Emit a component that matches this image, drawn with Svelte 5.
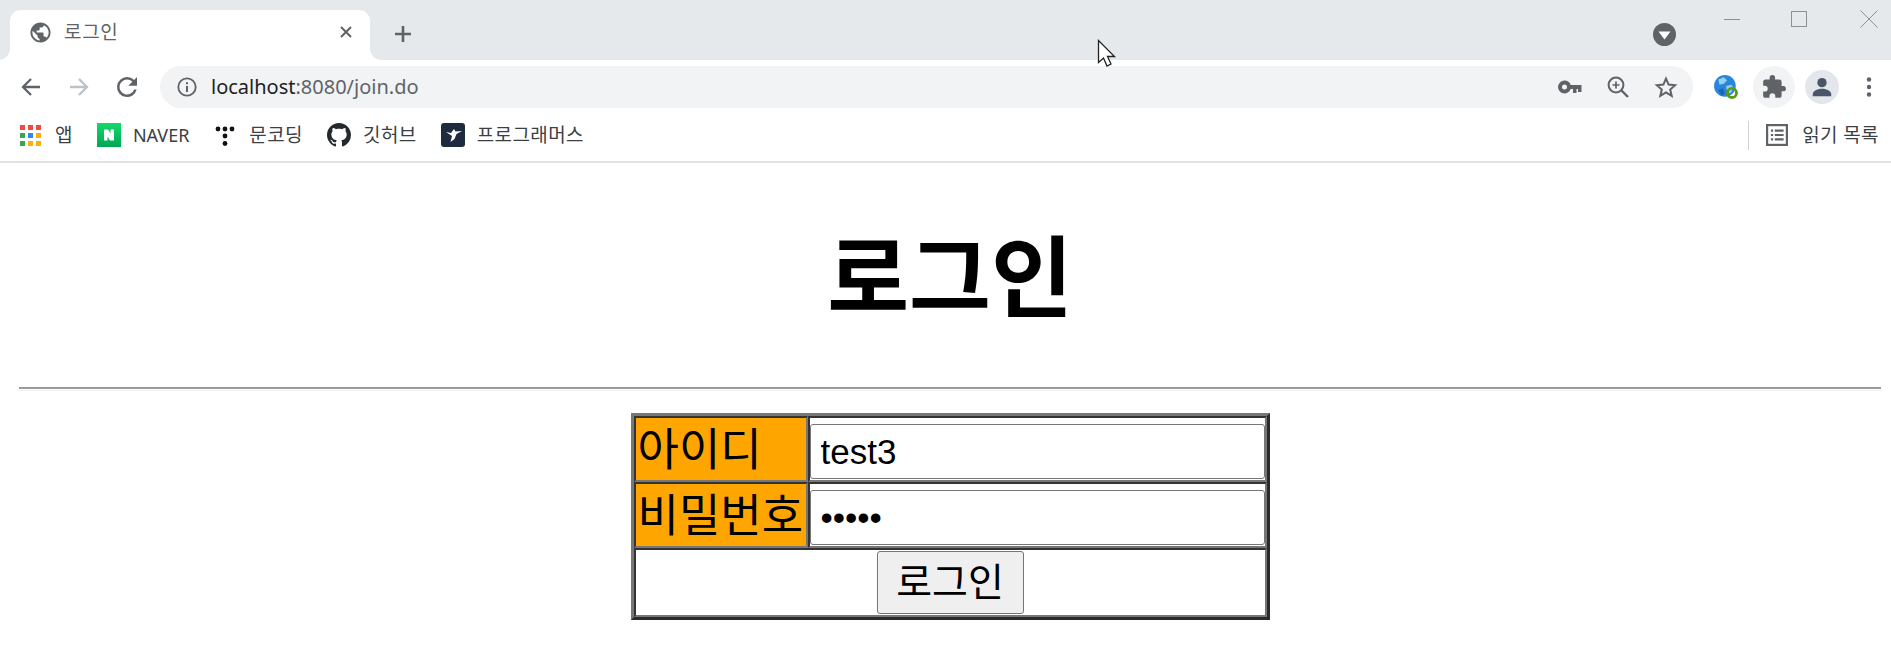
<script lang="ts">
	const bookmarks = [
		{ id: 'apps', label: '앱' },
		{ id: 'naver', label: 'NAVER' },
		{ id: 'moon', label: '문코딩' },
		{ id: 'github', label: '깃허브' },
		{ id: 'prog', label: '프로그래머스' }
	];
	const appColors = ['#ef4b42', '#ef4b42', '#ef4b42', '#34a853', '#2a8cf0', '#fbaf0c', '#34a853', '#fbaf0c', '#fbaf0c'];
</script>

<div class="chrome">
	<div class="tabstrip">
		<div class="tab">
			<svg class="favicon" viewBox="0 0 24 24" width="23" height="23">
				<path fill="#5f6368" d="M12 1.500C6.200 1.500 1.500 6.200 1.500 12S6.200 22.500 12 22.500 22.500 17.800 22.500 12 17.800 1.500 12 1.500zM10.900 20.300c-4.100-.5-7.300-4-7.300-8.300 0-.7.100-1.300.2-1.900L9 15.300v1.100c0 1.100.9 2 2 2v1.900zm7.200-2.700c-.3-.8-1-1.400-1.900-1.400h-1v-3.100c0-.6-.5-1-1-1H8v-2.100h2.100c.6 0 1-.5 1-1V6.900h2.100c1.100 0 2.100-.9 2.100-2.100v-.4c3.100 1.200 5.200 4.200 5.200 7.700 0 2.200-.9 4.100-2.300 5.500z" />
			</svg>
			<span class="tab-title">로그인</span>
			<svg class="tab-close" viewBox="0 0 14 14" width="14" height="14">
				<path d="M2 2l10 10M12 2L2 12" stroke="#5f6368" stroke-width="2" fill="none" />
			</svg>
		</div>
		<svg class="plus" viewBox="0 0 20 20" width="20" height="20">
			<path d="M10 2v16M2 10h16" stroke="#5f6368" stroke-width="2.600" fill="none" />
		</svg>
		<svg class="tabsearch" viewBox="0 0 23 23" width="23" height="23">
			<circle cx="11.500" cy="11.500" r="11.500" fill="#5f6368" />
			<path d="M5.500 8.500h12l-6 8z" fill="#fff" />
		</svg>
		<div class="win">
			<svg viewBox="0 0 16 16" width="16" height="16"><path d="M0 8.500h16" stroke="#8d9094" fill="none" /></svg>
			<svg viewBox="0 0 16 16" width="16" height="16"><rect x="0.500" y="0.500" width="15" height="15" stroke="#8d9094" fill="none" /></svg>
			<svg viewBox="0 0 18 18" width="18" height="18"><path d="M.5.500l17 17M17.500.500l-17 17" stroke="#8d9094" fill="none" /></svg>
		</div>
	</div>

	<div class="toolbar">
		<svg class="nav" viewBox="0 0 24 24" width="24" height="24"><path d="M21 12H4.500M12 4l-8 8 8 8" stroke="#5f6368" stroke-width="2.300" fill="none" /></svg>
		<svg class="nav" viewBox="0 0 24 24" width="24" height="24"><path d="M3 12h16.500M12 4l8 8-8 8" stroke="#bdc1c6" stroke-width="2.300" fill="none" /></svg>
		<svg class="nav" viewBox="0 0 24 24" width="24" height="24"><path fill="#5f6368" d="M19.100 4.900A9.900 9.900 0 0 0 12 2a10 10 0 1 0 9.700 12.500h-2.600A7.500 7.500 0 1 1 12 4.500c2.100 0 3.900.9 5.300 2.200L13.300 10.800H22V2z" /></svg>
		<div class="omnibox">
			<svg viewBox="0 0 20 20" width="20" height="20">
				<circle cx="10" cy="10" r="8.700" stroke="#5f6368" stroke-width="1.800" fill="none" />
				<path d="M9 9h2v6H9zM9 5.200h2v2H9z" fill="#5f6368" />
			</svg>
			<span class="url"><b>localhost</b>:8080/join.do</span>
			<div class="omni-icons">
				<svg viewBox="0 0 24 16" width="24" height="16">
					<path fill="#5f6368" d="M6.500 1.500A6.500 6.500 0 1 0 12.700 10H15v4h3.500v-4H20v3h3.500V6H12.700A6.500 6.500 0 0 0 6.500 1.500zm0 4a2.500 2.500 0 1 1 0 5 2.500 2.500 0 0 1 0-5z" />
				</svg>
				<svg viewBox="0 0 24 24" width="24" height="24">
					<circle cx="10" cy="10" r="7.400" stroke="#5f6368" stroke-width="2" fill="none" />
					<path d="M15.500 15.500L22 22" stroke="#5f6368" stroke-width="2.400" fill="none" />
					<path d="M10 6.500v7M6.500 10h7" stroke="#5f6368" stroke-width="1.700" fill="none" />
				</svg>
				<svg viewBox="0 0 24 24" width="24" height="24">
					<path d="M12 3.600l2.600 6 6.500.6-4.900 4.300 1.500 6.400L12 17.500l-5.700 3.400 1.500-6.400-4.900-4.300 6.500-.6z" stroke="#5f6368" stroke-width="2" fill="none" />
				</svg>
			</div>
		</div>
		<svg class="earth" viewBox="0 0 24 24" width="26" height="26">
			<circle cx="11" cy="11" r="10" fill="#2a86d8" />
			<path d="M5 5l5-2 3 3-3 3-4 1zM12 11l5-1 2 3-3 5-3-2z" fill="#8fd0f5" />
			<path d="M5 15l4-2 2 5-3 2z" fill="#1667b5" />
			<circle cx="17.500" cy="17.500" r="4.200" stroke="#5c9a12" stroke-width="2.600" fill="none" />
		</svg>
		<div class="ext-btn">
			<svg viewBox="0 0 24 24" width="26" height="26">
				<path fill="#5f6368" d="M20.500 11H19V7c0-1.100-.9-2-2-2h-4V3.500a2.500 2.500 0 0 0-5 0V5H4c-1.100 0-2 .9-2 2v3.800h1.500a2.700 2.700 0 0 1 0 5.400H2V20c0 1.100.9 2 2 2h3.800v-1.500a2.700 2.700 0 0 1 5.400 0V22H17c1.100 0 2-.9 2-2v-4h1.500a2.500 2.500 0 0 0 0-5z" />
			</svg>
		</div>
		<div class="avatar">
			<svg viewBox="0 0 24 24" width="26" height="26">
				<circle cx="12" cy="8" r="4.300" fill="#4a5568" />
				<path d="M3.500 20.500v-2c0-3.200 5.500-4.800 8.500-4.800s8.500 1.600 8.500 4.800v2z" fill="#4a5568" />
			</svg>
		</div>
		<svg class="menu" viewBox="0 0 6 24" width="6" height="24">
			<circle cx="3" cy="4.500" r="2.200" fill="#5f6368" />
			<circle cx="3" cy="12" r="2.200" fill="#5f6368" />
			<circle cx="3" cy="19.500" r="2.200" fill="#5f6368" />
		</svg>
	</div>

	<div class="bookmarks">
		{#each bookmarks as b}
			<div class="bm bm-{b.id}">
				{#if b.id === 'apps'}
					<div class="apps-grid">
						{#each appColors as c}
							<i style="background:{c}"></i>
						{/each}
					</div>
				{:else if b.id === 'naver'}
					<svg viewBox="0 0 24 24" width="24" height="24">
						<defs>
							<linearGradient id="nv" x1="0" y1="0" x2="0" y2="1">
								<stop offset="0" stop-color="#14d96b" />
								<stop offset="1" stop-color="#00a653" />
							</linearGradient>
						</defs>
						<rect width="24" height="24" fill="url(#nv)" />
						<path d="M7 6.500h4l2.500 4v-4H17v11h-4l-2.500-4v4H7z" fill="#fff" />
					</svg>
				{:else if b.id === 'moon'}
					<svg viewBox="0 0 24 24" width="24" height="24">
						<g fill="#111">
							<circle cx="5" cy="6" r="2.400" />
							<circle cx="12" cy="6" r="2.400" />
							<circle cx="19" cy="6" r="2.400" />
							<circle cx="12" cy="13" r="2.400" />
							<circle cx="12" cy="20.500" r="2.400" />
						</g>
					</svg>
				{:else if b.id === 'github'}
					<svg viewBox="0 0 16 16" width="24" height="24">
						<path fill="#24292e" d="M8 0C3.580 0 0 3.580 0 8c0 3.540 2.290 6.530 5.470 7.590.4.070.55-.17.55-.38 0-.19-.01-.82-.01-1.490-2.010.37-2.530-.49-2.690-.94-.09-.23-.48-.94-.82-1.130-.28-.15-.68-.52-.01-.53.630-.01 1.080.58 1.230.82.720 1.210 1.870.870 2.330.66.070-.52.280-.87.510-1.070-1.780-.2-3.640-.89-3.640-3.950 0-.87.310-1.590.82-2.150-.08-.2-.36-1.020.08-2.120 0 0 .67-.21 2.200.82.640-.18 1.320-.27 2-.27s1.360.09 2 .27c1.530-1.040 2.200-.82 2.200-.82.44 1.100.160 1.920.08 2.120.51.560.82 1.270.82 2.150 0 3.070-1.870 3.750-3.650 3.950.29.250.54.730.54 1.480 0 1.070-.01 1.930-.01 2.200 0 .21.150.46.550.38A8.010 8.010 0 0 0 16 8c0-4.420-3.580-8-8-8z" />
					</svg>
				{:else}
					<svg viewBox="0 0 24 24" width="24" height="24">
						<rect width="24" height="24" rx="3" fill="#1e2a3e" />
						<path d="M5 9l5 1 3-4 1.500 2.500L21 8l-5.500 3-2 5-4 3 1.500-6z" fill="#fff" />
					</svg>
				{/if}
				<span>{b.label}</span>
			</div>
		{/each}
		<div class="reading">
			<svg viewBox="0 0 20 20" width="22" height="22">
				<rect x="1" y="1" width="18" height="18" stroke="#5f6368" stroke-width="2" fill="none" />
				<path d="M4.500 5h2v2h-2zM4.500 9h2v2h-2zM4.500 13h2v2h-2zM8 5h8v2H8zM8 9h8v2H8zM8 13h8v2H8z" fill="#5f6368" />
			</svg>
			<span>읽기 목록</span>
		</div>
	</div>
</div>

<main class="page">
	<h1>로그인</h1>
	<hr />
	<form onsubmit={(e) => e.preventDefault()}>
		<table>
			<tbody>
				<tr>
					<th>아이디</th>
					<td><input type="text" value="test3" /></td>
				</tr>
				<tr>
					<th>비밀번호</th>
					<td><input type="password" value="12345" /></td>
				</tr>
				<tr>
					<td colspan="2" class="submit"><button type="submit">로그인</button></td>
				</tr>
			</tbody>
		</table>
	</form>
</main>

<svg class="cursor" viewBox="0 0 20 30" width="20" height="30">
	<path d="M1.500 1.500v22l5-4.500 3.500 8 4-2-3.500-7.500h7z" fill="#fff" stroke="#222" stroke-width="1.300" />
</svg>

<style>
	:global(body) {
		margin: 0;
		background: #fff;
		overflow: hidden;
		font-family: 'Liberation Sans', 'Noto Sans CJK KR', sans-serif;
	}

	.chrome {
		font-family: 'Noto Sans', 'Noto Sans CJK KR', sans-serif;
		border-bottom: 2px solid #dfe1e5;
	}

	.tabstrip {
		display: flex;
		align-items: flex-start;
		height: 60px;
		background: #e6e9ec;
		padding-left: 10px;
	}

	.tab {
		position: relative;
		display: flex;
		align-items: center;
		box-sizing: border-box;
		width: 360px;
		height: 50px;
		margin-top: 10px;
		padding: 0 17px 6px 19px;
		background: #fff;
		border-radius: 11px 11px 0 0;
	}

	.tab::before,
	.tab::after {
		content: '';
		position: absolute;
		bottom: 0;
		width: 11px;
		height: 11px;
	}

	.tab::before {
		left: -11px;
		background: radial-gradient(circle at 0 0, transparent 10.500px, #fff 11px);
	}

	.tab::after {
		right: -11px;
		background: radial-gradient(circle at 100% 0, transparent 10.500px, #fff 11px);
	}

	.tab-title {
		margin-left: 12px;
		font-size: 19px;
		letter-spacing: 0.7px;
		line-height: 26px;
		color: #5f6368;
		flex: 1;
	}

	.plus {
		margin: 24px 0 0 23px;
	}

	.tabsearch {
		margin: 23px 0 0 auto;
	}

	.win {
		display: flex;
		align-items: center;
		gap: 53px;
		margin: 10px 13px 0 48px;
	}

	.win svg:first-child {
		margin-right: -2px;
	}

	.toolbar {
		display: flex;
		align-items: center;
		box-sizing: border-box;
		height: 52px;
		padding: 2px 19px 0;
	}

	.nav {
		flex: none;
		margin-right: 24px;
	}

	.omnibox {
		flex: 1;
		display: flex;
		align-items: center;
		height: 42px;
		margin-left: -3px;
		padding: 0 15px 0 17px;
		background: #f1f3f4;
		border-radius: 21px;
	}

	.url {
		margin-left: 14px;
		font-size: 20px;
		line-height: 28px;
		color: #5f6368;
	}

	.url b {
		font-weight: 400;
		color: #202124;
	}

	.omni-icons {
		display: flex;
		align-items: center;
		gap: 24px;
		margin-left: auto;
	}

	.earth {
		margin-left: 20px;
	}

	.ext-btn {
		display: flex;
		align-items: center;
		justify-content: center;
		width: 42px;
		height: 42px;
		margin-left: 14px;
		border-radius: 50%;
		background: #f1f3f4;
	}

	.avatar {
		display: flex;
		align-items: center;
		justify-content: center;
		width: 34px;
		height: 34px;
		margin-left: 10px;
		border-radius: 50%;
		background: #e3e6ea;
	}

	.menu {
		margin-left: 27px;
	}

	.bookmarks {
		display: flex;
		align-items: center;
		box-sizing: border-box;
		height: 49px;
		padding: 0 12px 3px 20px;
		font-size: 19px;
		letter-spacing: 0.4px;
		line-height: 26px;
		color: #3c4043;
	}

	.bm {
		display: flex;
		align-items: center;
		gap: 12px;
		margin-right: 24px;
	}

	.bm-naver span {
		font-size: 18px;
		letter-spacing: 0;
	}

	.apps-grid {
		display: grid;
		grid-template-columns: repeat(3, 5px);
		gap: 3px;
		margin-right: 2px;
	}

	.apps-grid i {
		height: 5px;
	}

	.reading {
		display: flex;
		align-items: center;
		gap: 14px;
		margin-left: auto;
		padding-left: 17px;
		height: 29px;
		border-left: 1px solid #d0d3d7;
	}

	.page {
		padding: 0 10px 0 19px;
	}

	h1 {
		margin: 0;
		padding: 49px 0 40px;
		font-size: 89px;
		line-height: 135px;
		text-align: center;
		color: #000;
	}

	hr {
		height: 1px;
		margin: 0 0 22px;
		border-style: solid;
		border-width: 2px 0 1px;
		border-color: #9a9a9a #eee #eee;
		background: #fff;
	}

	table {
		width: 639px;
		margin: 0 auto;
		border-collapse: separate;
		border-spacing: 0;
		border: 3px solid;
		border-color: #777 #2b2b2b #2b2b2b #777;
	}

	th,
	td {
		padding: 6px 0 1px;
		border: 2px solid;
		border-color: #333 #777 #777 #333;
	}

	th {
		box-sizing: content-box;
		width: 168px;
		padding: 3px 0 0 2px;
		background: #ffa500;
		font-size: 45px;
		font-weight: 400;
		line-height: 56px;
		text-align: left;
		white-space: nowrap;
	}

	input {
		display: block;
		box-sizing: border-box;
		width: 100%;
		height: 55px;
		padding: 1px 10px;
		border: 1px solid #767676;
		border-radius: 3px;
		font-family: 'Liberation Sans', sans-serif;
		font-size: 35px;
	}

	.submit {
		padding: 1px 0;
		text-align: center;
		line-height: 0;
	}

	button {
		width: 147px;
		height: 63px;
		padding: 0;
		border: 1px solid #767676;
		border-radius: 3px;
		background: #efefef;
		font-family: inherit;
		font-size: 39px;
		line-height: 1;
		color: #000;
	}

	.cursor {
		position: absolute;
		left: 1097px;
		top: 39px;
	}
</style>
